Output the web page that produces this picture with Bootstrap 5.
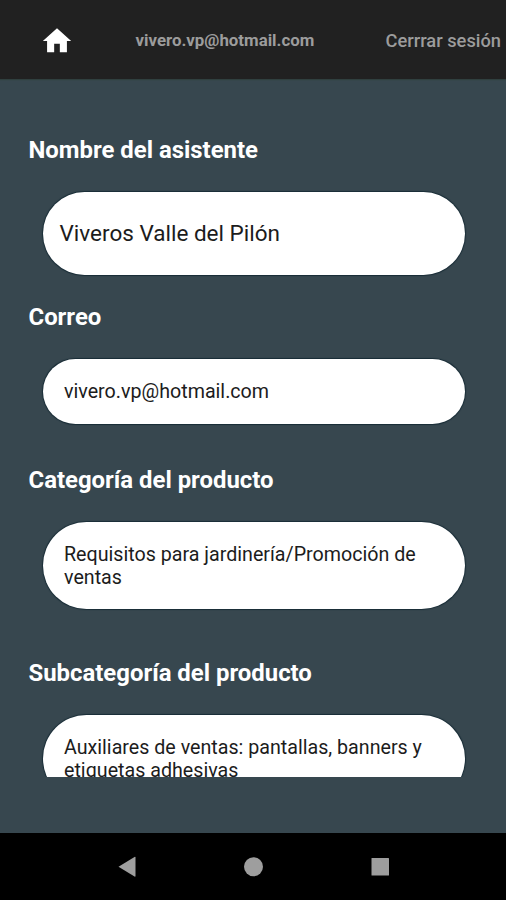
<!DOCTYPE html>
<html lang="es">
<head>
<meta charset="utf-8">
<meta name="viewport" content="width=device-width, initial-scale=1">
<title>Asistente</title>
<link href="https://cdn.jsdelivr.net/npm/bootstrap@5.3.0/dist/css/bootstrap.min.css" rel="stylesheet">
<style>
body{font-family:Roboto,sans-serif;background:#37474f;height:900px}
.topbar{height:79px;background:#212121;color:#9c9c9c;font-size:18.3px;font-weight:500;padding:2px 5px 0 40px;box-shadow:0 1px 1px #30403f}
.user-mail{font-size:16.85px;font-weight:700;margin-left:61.5px}
.form-area{height:698px;padding:57px 41px 0 28.5px}
.field-label{font-size:23.9px;line-height:28px;font-weight:700;color:#fff;margin:0 0 27.5px}
.pill{margin-left:14px;width:422.5px;border-radius:44px;background:#fff;color:#1c1c1c;font-size:19.67px;line-height:22.5px;padding:2.5px 0 0 21.5px;box-shadow:0 0 1px 1px #182c36}
.pill-name{height:83px;font-size:22.5px;padding:0 0 0 17px;margin-bottom:28.5px}
.pill-mail{height:65px;margin-bottom:42.500px}
.pill-cat{height:87.5px;margin-bottom:50px;padding-top:3px}
.navkeys{height:67px;background:#000}
</style>
<script src="https://cdn.jsdelivr.net/npm/bootstrap@5.3.0/dist/js/bootstrap.bundle.min.js"></script>
</head>
<body class="d-flex flex-column overflow-hidden">
<header class="topbar d-flex align-items-center flex-shrink-0 text-nowrap">
<svg width="34" height="34" viewBox="0 0 24 24" fill="#fff"><path d="M10 20v-6h4v6h5v-8h3L12 3 2 12h3v8z"/></svg>
<span class="user-mail">vivero.vp@hotmail.com</span>
<span class="ms-auto">Cerrrar sesión</span>
</header>
<main class="form-area overflow-hidden flex-shrink-0">
<h2 class="field-label">Nombre del asistente</h2>
<div class="pill pill-name d-flex align-items-center">Viveros Valle del Pilón</div>
<h2 class="field-label">Correo</h2>
<div class="pill pill-mail d-flex align-items-center">vivero.vp@hotmail.com</div>
<h2 class="field-label">Categoría del producto</h2>
<div class="pill pill-cat d-flex align-items-center">Requisitos para jardinería/Promoción de<br>ventas</div>
<h2 class="field-label">Subcategoría del producto</h2>
<div class="pill pill-cat d-flex align-items-center">Auxiliares de ventas: pantallas, banners y<br>etiquetas adhesivas</div>
</main>
<footer class="navkeys mt-auto flex-shrink-0">
<svg class="d-block" width="506" height="67" fill="#9e9e9e"><path d="M118.5 33.7 134.5 24q1-.5 1 .6v18.400q0 1-1 .6z"/><circle cx="253.500" cy="33.700" r="9.500"/><rect x="371.500" y="25" width="17.500" height="17.500" rx=".5"/></svg>
</footer>
</body>
</html>
